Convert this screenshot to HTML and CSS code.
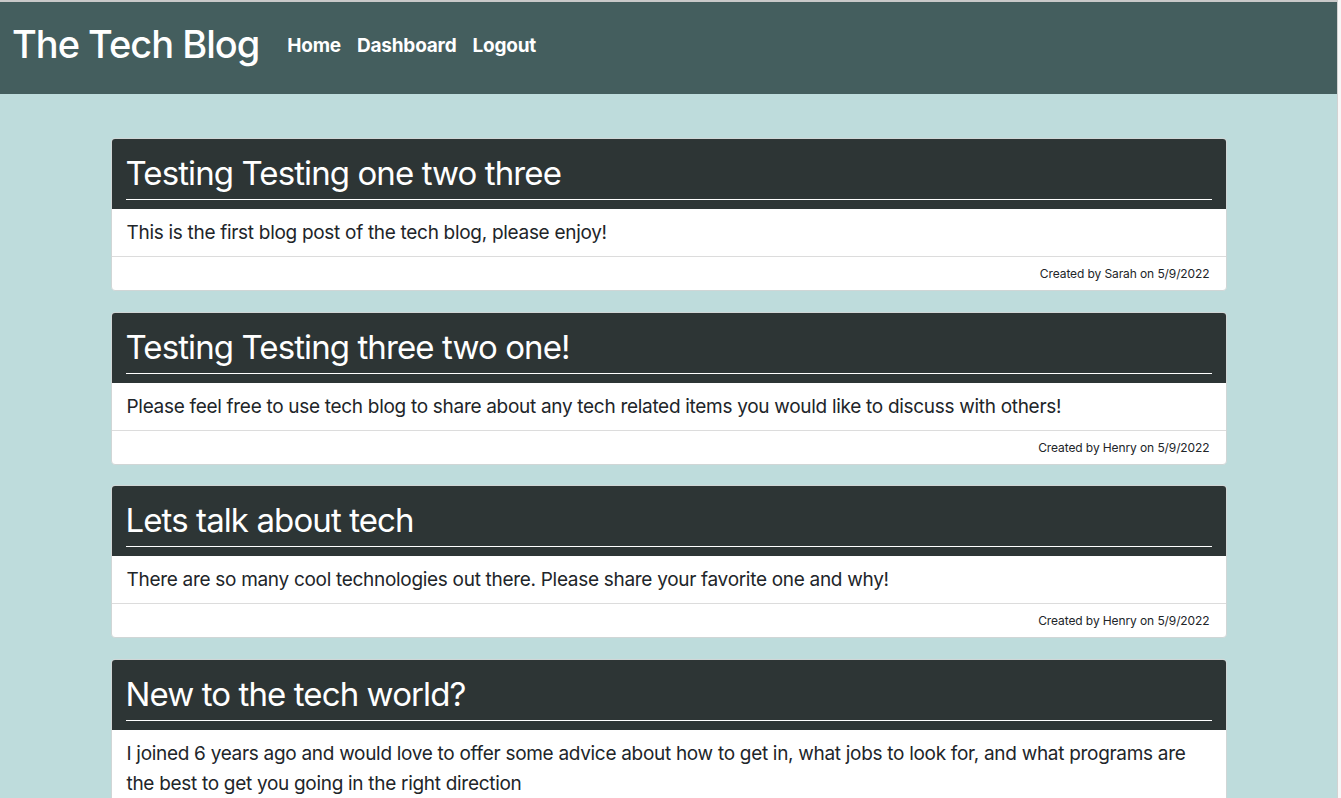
FILE: index.html
```html
<!DOCTYPE html>
<html lang="en">
<head>
<meta charset="utf-8">
<title>The Tech Blog</title>
<link rel="stylesheet" href="styles.css">
</head>
<body>
<div class="window">
  <header class="topbar">
    <h1 class="brand">The Tech Blog</h1>
    <nav class="nav">
      <a href="#">Home</a>
      <a href="#">Dashboard</a>
      <a href="#">Logout</a>
    </nav>
  </header>
  <main class="posts">
    <article class="card">
      <div class="card-header"><h2>Testing Testing one two three</h2></div>
      <div class="card-body">This is the first blog post of the tech blog, please enjoy!</div>
      <div class="card-footer">Created by Sarah on 5/9/2022</div>
    </article>
    <article class="card">
      <div class="card-header"><h2>Testing Testing three two one!</h2></div>
      <div class="card-body">Please feel free to use tech blog to share about any tech related items you would like to discuss with others!</div>
      <div class="card-footer">Created by Henry on 5/9/2022</div>
    </article>
    <article class="card">
      <div class="card-header"><h2>Lets talk about tech</h2></div>
      <div class="card-body">There are so many cool technologies out there. Please share your favorite one and why!</div>
      <div class="card-footer">Created by Henry on 5/9/2022</div>
    </article>
    <article class="card">
      <div class="card-header"><h2>New to the tech world?</h2></div>
      <div class="card-body">I joined 6 years ago and would love to offer some advice about how to get in, what jobs to look for, and what programs are the best to get you going in the right direction</div>
      <div class="card-footer">Created by Henry on 5/9/2022</div>
    </article>
  </main>
</div>
</body>
</html>
```

FILE: styles.css
```css
html, body {
  margin: 0;
  padding: 0;
  background: #f7f7f7;
  height: 100%;
  overflow: hidden;
}
body {
  font-family: Inter, "Noto Sans", "Liberation Sans", sans-serif;
  color: #212529;
}
.window {
  width: 1337px;
  height: 796px;
  border-top: 2px solid #c9c9c9;
  border-right: 1px solid #d2d2d2;
  background: #bedcdc;
  overflow: hidden;
}
.topbar {
  height: 92px;
  background: #445e5e;
  display: flex;
  align-items: center;
  padding: 0 12px 9px;
  box-sizing: border-box;
}
.brand {
  margin: 0;
  font-size: 38px;
  font-weight: 500;
  color: #fff;
  letter-spacing: -1px;
  line-height: 46px;
}
.nav {
  display: flex;
  gap: 16px;
  margin-left: 28px;
  margin-top: 3px;
}
.nav a {
  color: #fff;
  text-decoration: none;
  font-weight: 700;
  font-size: 19px;
  letter-spacing: -0.2px;
}
.posts {
  width: 1116px;
  margin: 44px auto 0;
  display: flex;
  flex-direction: column;
  gap: 20.5px;
}
.card {
  background: #fff;
  border: 1px solid #d0d6d6;
  border-radius: 4px;
  overflow: hidden;
}
.card-header {
  background: #2d3535;
  padding: 14px 15px 9px;
  margin: -1px -1px 0;
}
.card-header h2 {
  margin: 0;
  font-size: 33px;
  font-weight: 400;
  line-height: 42px;
  color: #fff;
  padding-bottom: 5px;
  border-bottom: 1px solid #fff;
  letter-spacing: -0.9px;
}
.card-body {
  padding: 9px 15px 8px;
  font-size: 19px;
  line-height: 30px;
  color: #212529;
  letter-spacing: -0.3px;
}
.card-footer {
  border-top: 1px solid #dcdcdc;
  padding: 0 16px;
  height: 33px;
  display: flex;
  align-items: center;
  justify-content: flex-end;
  font-size: 12px;
  color: #212529;
  letter-spacing: -0.1px;
}
```
